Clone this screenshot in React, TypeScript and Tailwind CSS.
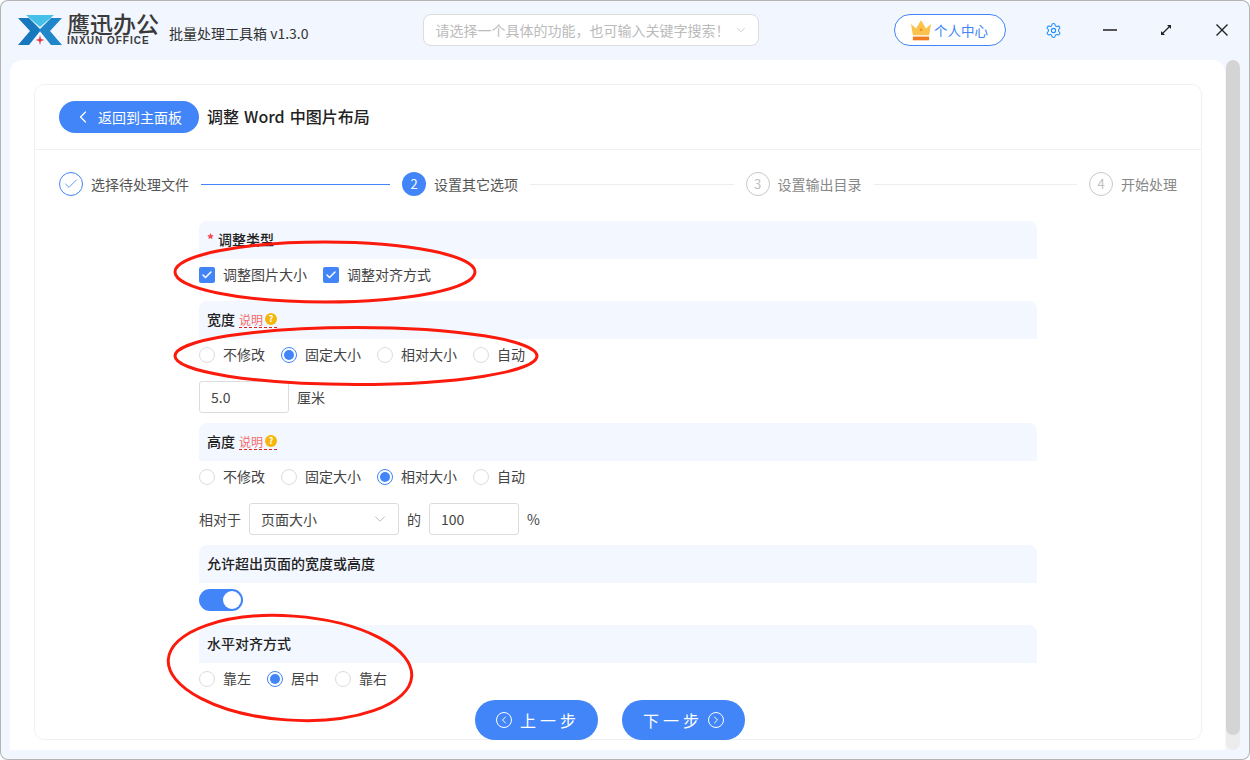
import { ChevronDown, ChevronLeft, ChevronRight, Check, Settings } from "lucide-react";

const Logo = () => (
  <svg width="44" height="32" viewBox="0 0 44 32" className="shrink-0">
    <polygon points="8,1 36,1 22,13" fill="#45c0e8" />
    <polygon points="0,4 11,4 23,16 11,31 0,31 12,17" fill="#1878bd" />
    <polygon points="44,4 33,4 21,16 33,31 44,31 32,17" fill="#1f86c9" />
    <polygon points="22,21 23,25 26.5,26 23,27 22,31 21,27 17.5,26 21,25" fill="#e8323c" />
  </svg>
);

const Crown = () => (
  <svg width="20" height="22" viewBox="2 1.5 16 17.5" className="shrink-0">
    <path d="M2 5.5 L6 9 L10 2.5 L14 9 L18 5.5 L16.5 14.5 H3.5 Z" fill="#fbc24c" />
    <circle cx="10" cy="10" r="1" fill="#f08a1d" />
    <rect x="3.5" y="15.5" width="13" height="3" fill="#f47a20" />
  </svg>
);

const Hint = () => (
  <span className="flex items-center border-b border-dashed border-[#e02020] ml-[4px] mt-[1px]">
    <span className="text-[12px] leading-[15px] text-[#f56c6c] font-normal">说明</span>
    <span className="w-[12px] h-[12px] ml-[2px] rounded-full bg-[#f5b70c] text-white text-[9px] leading-[12px] text-center font-bold">?</span>
  </span>
);

const SectionLabel = ({ text, required, hint }: { text: string; required?: boolean; hint?: boolean }) => (
  <div className="h-[38px] flex items-center px-2 pb-[2px] rounded-t-lg bg-[#f3f7ff] text-[14px] font-medium text-[#222]">
    {required && <span className="text-[#f5404f] mr-[4px] text-[14px] font-bold">*</span>}
    {text}
    {hint && <Hint />}
  </div>
);

const Radio = ({ label, on }: { label: string; on?: boolean }) => (
  <div className="flex items-center gap-2">
    {on ? (
      <span className="w-4 h-4 rounded-full border border-[#4285f8] flex items-center justify-center">
        <span className="w-[10px] h-[10px] rounded-full bg-[#4285f8]" />
      </span>
    ) : (
      <span className="w-4 h-4 rounded-full border border-[#dcdcdc]" />
    )}
    <span className="text-[14px] text-[#444] mb-[2px]">{label}</span>
  </div>
);

const RadioRow = ({ items, active }: { items: string[]; active: number }) => (
  <div className="h-8 flex items-center gap-4">
    {items.map((item, i) => (
      <Radio key={item} label={item} on={i === active} />
    ))}
  </div>
);

const CheckItem = ({ label }: { label: string }) => (
  <div className="flex items-center gap-2">
    <span className="w-4 h-4 rounded-[2px] bg-[#4285f8] flex items-center justify-center">
      <Check className="w-3 h-3 text-white" strokeWidth={3} />
    </span>
    <span className="text-[14px] text-[#444] mb-[2px]">{label}</span>
  </div>
);

const TextBox = ({ value }: { value: string }) => (
  <div className="w-[90px] h-8 flex items-center pl-[11px] rounded-[3px] border border-[#dcdcdc] text-[14px] text-[#444]">
    {value}
  </div>
);

const StepCircle = ({ n, state }: { n: number; state: "done" | "active" | "todo" }) => {
  if (state === "done") {
    return (
      <span className="w-6 h-6 rounded-full border border-[#4285f8] flex items-center justify-center shrink-0">
        <Check className="w-4 h-4 text-[#4285f8]" strokeWidth={1.25} />
      </span>
    );
  }
  if (state === "active") {
    return (
      <span className="w-6 h-6 rounded-full bg-[#4285f8] text-white text-[13px] flex items-center justify-center shrink-0">{n}</span>
    );
  }
  return (
    <span className="w-6 h-6 rounded-full border border-[#c8c8c8] text-[#c0c0c0] text-[13px] flex items-center justify-center shrink-0">{n}</span>
  );
};

const Steps = () => (
  <div className="flex items-center px-6 pt-[22px] text-[14px]">
    <StepCircle n={1} state="done" />
    <span className="ml-2 text-[#555] whitespace-nowrap">选择待处理文件</span>
    <span className="w-[189px] mx-3 h-px bg-[#4285f8]" />
    <StepCircle n={2} state="active" />
    <span className="ml-2 text-[#555] whitespace-nowrap">设置其它选项</span>
    <span className="flex-1 mx-3 h-px bg-[#eeeeee]" />
    <StepCircle n={3} state="todo" />
    <span className="ml-2 text-[#888] whitespace-nowrap">设置输出目录</span>
    <span className="flex-1 mx-3 h-px bg-[#eeeeee]" />
    <StepCircle n={4} state="todo" />
    <span className="ml-2 text-[#888] whitespace-nowrap">开始处理</span>
  </div>
);

const sizeOptions = ["不修改", "固定大小", "相对大小", "自动"];

export default function App() {
  return (
    <div className="relative w-[1250px] h-[760px] overflow-hidden rounded-[8px] bg-[#f2f6ff] shadow-[inset_0_0_0_1px_#b4b4b4] flex flex-col font-['Noto_Sans_CJK_SC','Noto_Sans',sans-serif]">
      {/* Title bar */}
      <div className="h-[60px] shrink-0 flex items-center">
        <div className="ml-[18px]"><Logo /></div>
        <div className="ml-[5px] mb-[2px] w-[95px] flex flex-col">
          <span className="text-[23px] leading-[23px] font-medium text-[#3a3a3a] whitespace-nowrap">鹰迅办公</span>
          <span className="mt-[1px] text-[10px] leading-[10px] font-bold text-[#3a3a3a] tracking-[1px] whitespace-nowrap font-['Liberation_Sans',sans-serif]">INXUN OFFICE</span>
        </div>
        <span className="ml-[7px] mt-[7px] text-[14px] text-[#333] whitespace-nowrap">批量处理工具箱 v1.3.0</span>
        <div className="ml-[114px] w-[336px] h-8 flex items-center justify-between pl-3 pr-[10px] rounded-lg border border-[#dcdcdc] bg-white">
          <span className="text-[14px] text-[#bbbbbb] whitespace-nowrap">请选择一个具体的功能，也可输入关键字搜索！</span>
          <ChevronDown className="w-[14px] h-[14px] text-[#bbbbbb]" strokeWidth={1.25} />
        </div>
        <div className="ml-[135px] w-[112px] h-8 flex items-center justify-center rounded-full border border-[#4285f8] bg-white">
          <Crown />
          <span className="ml-[3px] text-[13.5px] text-[#4285f8] whitespace-nowrap">个人中心</span>
        </div>
        <Settings className="ml-[39px] w-[17px] h-[17px] text-[#1e8fff]" strokeWidth={1.5} />
        <span className="ml-[41px] w-[14px] h-[2px] bg-[#555]" />
        <svg width="14" height="14" viewBox="0 0 14 14" className="ml-[42px]">
          <path d="M3 11 L11 3" stroke="#222" strokeWidth="1.2" />
          <path d="M8 2 H12 V6 Z" fill="#222" />
          <path d="M2 8 V12 H6 Z" fill="#222" />
        </svg>
        <svg width="14" height="14" viewBox="0 0 14 14" className="ml-[42px]">
          <path d="M1.5 1.5 L12.5 12.5 M12.5 1.5 L1.5 12.5" stroke="#222" strokeWidth="1.4" />
        </svg>
      </div>

      {/* Body */}
      <div className="flex-1 flex pl-[10px]">
        <div className="w-[1215px] h-[690px] rounded-t-[12px] bg-white pl-6 pt-6">
          <div className="w-[1168px] h-[656px] rounded-[10px] border border-[#f0f0f0] bg-white">
            <div className="h-[65px] flex items-center px-6 border-b border-[#f0f0f0]">
              <button className="w-[140px] h-8 flex items-center rounded-full bg-[#4285f8] text-white text-[14px]">
                <ChevronLeft className="ml-[14px] w-5 h-5" strokeWidth={1.5} />
                <span className="ml-[5px] whitespace-nowrap">返回到主面板</span>
              </button>
              <h1 className="ml-2 mb-[3px] text-[16px] font-medium text-[#222] whitespace-nowrap [word-spacing:1.5px]">调整 Word 中图片布局</h1>
            </div>

            <Steps />

            <div className="ml-[164px] w-[838px] mt-[25px]">
              <SectionLabel text="调整类型" required />
              <div className="h-8 flex items-center gap-4 mb-[10px]">
                <CheckItem label="调整图片大小" />
                <CheckItem label="调整对齐方式" />
              </div>

              <SectionLabel text="宽度" hint />
              <RadioRow items={sizeOptions} active={1} />
              <div className="flex items-center gap-2 mt-[10px] mb-[10px]">
                <TextBox value="5.0" />
                <span className="text-[14px] text-[#444]">厘米</span>
              </div>

              <SectionLabel text="高度" hint />
              <RadioRow items={sizeOptions} active={2} />
              <div className="flex items-center gap-2 mt-[10px] mb-[10px] text-[14px] text-[#444]">
                <span>相对于</span>
                <div className="w-[150px] h-8 flex items-center justify-between pl-[11px] pr-[9px] rounded-[3px] border border-[#dcdcdc]">
                  <span>页面大小</span>
                  <ChevronDown className="w-[18px] h-[18px] text-[#bbbbbb]" strokeWidth={1.25} />
                </div>
                <span>的</span>
                <TextBox value="100" />
                <span>%</span>
              </div>

              <SectionLabel text="允许超出页面的宽度或高度" />
              <div className="h-[42px] flex items-center pb-[8px]">
                <span className="w-[44px] h-[22px] rounded-full bg-[#4285f8] flex items-center justify-end pr-[2px]">
                  <span className="w-[18px] h-[18px] rounded-full bg-white" />
                </span>
              </div>

              <SectionLabel text="水平对齐方式" />
              <RadioRow items={["靠左", "居中", "靠右"]} active={1} />
            </div>

            <div className="flex justify-center gap-6 pr-4 mt-[5px] text-white text-[16px] tracking-[4px]">
              <button className="w-[123px] h-10 flex items-center gap-2 pl-[21px] rounded-full bg-[#4285f8]">
                <span className="w-4 h-4 rounded-full border border-white flex items-center justify-center">
                  <ChevronLeft className="w-3 h-3" strokeWidth={2} />
                </span>
                <span className="whitespace-nowrap">上一步</span>
              </button>
              <button className="w-[123px] h-10 flex items-center gap-[5px] pl-[21px] rounded-full bg-[#4285f8]">
                <span className="whitespace-nowrap">下一步</span>
                <span className="w-4 h-4 rounded-full border border-white flex items-center justify-center">
                  <ChevronRight className="w-3 h-3" strokeWidth={2} />
                </span>
              </button>
            </div>
          </div>
        </div>

        {/* Scrollbar */}
        <div className="ml-[1px] w-[14px] h-[690px] rounded-full bg-[#ececec] overflow-hidden">
          <div className="h-[675px] rounded-full bg-[#d4d4d4]" />
        </div>
      </div>

      {/* Hand-drawn annotations over the form */}
      <svg width="1250" height="760" className="absolute left-0 top-0 pointer-events-none">
        <g fill="none" stroke="#fb1a0c" strokeWidth="3">
          <ellipse cx="325" cy="272" rx="150" ry="30" />
          <ellipse cx="356" cy="356" rx="181" ry="28.5" />
          <ellipse cx="290" cy="668" rx="122" ry="52" transform="rotate(4 290 668)" />
        </g>
      </svg>
    </div>
  );
}
